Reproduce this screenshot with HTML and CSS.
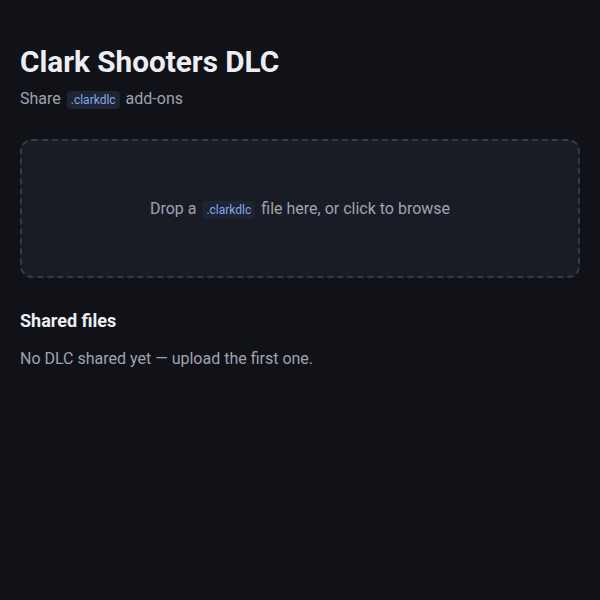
FILE: index.html
```html
<!DOCTYPE html>
<html lang="en">
<head>
<meta charset="utf-8">
<title>Clark Shooters DLC</title>
<link rel="stylesheet" href="styles.css">
</head>
<body>
<main class="page">
  <header class="head">
    <h1 class="title">Clark Shooters DLC</h1>
    <p class="subtitle">Share <code class="ext">.clarkdlc</code> add-ons</p>
  </header>
  <label class="drop">
    <span class="drop-text">Drop a <code class="ext">.clarkdlc</code> file here, or click to browse</span>
  </label>
  <section class="files">
    <h2 class="files-title">Shared files</h2>
    <p class="empty">No DLC shared yet — upload the first one.</p>
  </section>
</main>
</body>
</html>
```
FILE: styles.css
```css
html, body {
  margin: 0;
  padding: 0;
  background: #111218;
  height: 100%;
}
body {
  font-family: Roboto, "Noto Sans", sans-serif;
  color: #e6e8ee;
}
.page {
  padding: 44px 20px 20px;
}
.title {
  margin: 0;
  font-size: 29.7px;
  font-weight: 700;
  line-height: 36px;
  color: #eceef3;
}
.subtitle {
  margin: 8px 0 0;
  font-size: 16px;
  color: #9ea3b0;
  line-height: 1.4;
}
.ext {
  font-family: Roboto, "Noto Sans", sans-serif;
  font-size: 12px;
  color: #86a8e6;
  background: #1d2434;
  border-radius: 4px;
  padding: 2px 4px;
  margin: 0 2px;
}
.drop {
  display: flex;
  align-items: center;
  justify-content: center;
  margin-top: 29px;
  height: 139px;
  box-sizing: border-box;
  border: 2px dashed #343946;
  border-radius: 12px;
  background: #1a1c25;
  color: #9ea3b0;
  font-size: 16px;
  cursor: pointer;
}
.files {
  margin-top: 31px;
}
.files-title {
  margin: 0;
  font-size: 18px;
  font-weight: 700;
  color: #eceef3;
  line-height: 1.3;
}
.empty {
  margin: 15px 0 0;
  font-size: 16px;
  color: #9ea3b0;
  line-height: 1.4;
}
```
